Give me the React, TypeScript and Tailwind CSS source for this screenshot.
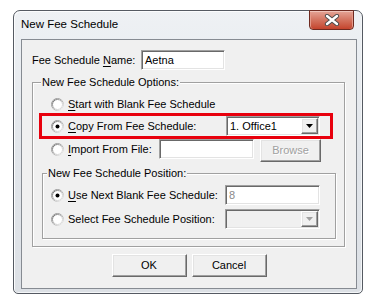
import type { ReactNode } from 'react';

function Radio({ checked = false }: { checked?: boolean }) {
    return (
        <svg width="13" height="13" viewBox="0 0 13 13" className="shrink-0">
            <defs>
                <linearGradient id="rOuter" x1="0" y1="0" x2="1" y2="1">
                    <stop offset="0" stopColor="#8a8a8a" />
                    <stop offset="0.55" stopColor="#b0b0b0" />
                    <stop offset="1" stopColor="#ffffff" />
                </linearGradient>
                <linearGradient id="rInner" x1="0" y1="0" x2="1" y2="1">
                    <stop offset="0" stopColor="#5a5a5a" />
                    <stop offset="0.55" stopColor="#c8c8c8" />
                    <stop offset="1" stopColor="#e3e3e3" />
                </linearGradient>
            </defs>
            <circle cx="6.5" cy="6.5" r="6" fill="#fff" stroke="url(#rOuter)" strokeWidth="1" />
            <circle cx="6.5" cy="6.5" r="5" fill="#fff" stroke="url(#rInner)" strokeWidth="1" />
            {checked && <circle cx="6.5" cy="6.5" r="2" fill="#000" />}
        </svg>
    );
}

// classic sunken 3d edge used by edits and combos
const sunken = 'border border-[#a0a0a0] border-r-white border-b-white shadow-[inset_1px_1px_0_#696969,inset_-1px_-1px_0_#e3e3e3]';
const raised = 'border border-white border-r-[#696969] border-b-[#696969] shadow-[inset_-1px_-1px_0_#a0a0a0,inset_1px_1px_0_#e3e3e3] bg-[#f0f0f0]';

function Combo({ value, disabled = false, w }: { value?: string; disabled?: boolean; w: string }) {
    return (
        <div className={`${sunken} ${w} h-[20px] flex items-stretch ${disabled ? 'bg-[#f0f0f0]' : 'bg-white'}`}>
            <div className="flex-1 flex items-center pl-[3px] pt-[1px]">{value}</div>
            <div className={`${raised} w-[17px] my-[1px] mr-[1px] flex items-center justify-center`}>
                <svg width="7" height="4" viewBox="0 0 7 4">
                    <path d="M0 0 H7 L3.5 4 Z" fill={disabled ? '#a0a0a0' : '#000'} />
                </svg>
            </div>
        </div>
    );
}

function Label({ children, w }: { children: ReactNode; w: string }) {
    return <span className={`${w} shrink-0 whitespace-nowrap`}>{children}</span>;
}

export default function App() {
    return (
        <div className="w-[380px] h-[304px] bg-white pt-[10px] pl-[13px] font-['Liberation_Sans',Arial,sans-serif] text-[11px] text-black">
            <div className="w-[350px] h-[284px] border border-[#555a62] rounded-t-[7px] rounded-b-[5px] bg-gradient-to-b from-[#eef1f4] via-[#e2e6eb] to-[#dce0e5] shadow-[inset_1px_1px_0_#fbfcfd,inset_-1px_-1px_0_#f4f6f8] flex flex-col">
                {/* title bar */}
                <div className="h-[28px] flex items-start justify-between shrink-0">
                    <div className="h-[28px] flex items-center pl-[7px] text-[11.5px] text-black">New Fee Schedule</div>
                    <div className="-mt-px mr-[8px] w-[45px] h-[20px] rounded-b-[4px] border border-[#6e2a20] bg-gradient-to-b from-[#e4a597] via-[#d3735f] to-[#c4432c] shadow-[inset_0_1px_0_#f0c4ba,inset_1px_0_0_#e59a8a,inset_-1px_0_0_#e59a8a] flex items-center justify-center">
                        <svg width="16" height="12" viewBox="0 0 16 12">
                            <path d="M3 2 L13 10 M13 2 L3 10" stroke="#4a4a4a" strokeWidth="4.2" strokeLinecap="round" />
                            <path d="M3 2 L13 10 M13 2 L3 10" stroke="#ffffff" strokeWidth="2.4" strokeLinecap="round" />
                        </svg>
                    </div>
                </div>

                {/* client area */}
                <div className="ml-[7px] w-[336px] h-[250px] border border-[#868b92] bg-[#f0f0f0] flex flex-col">
                    <div className="mt-[10px] ml-[10px] h-[20px] flex items-center">
                        <Label w="w-[109px]">Fee Schedule <u className="underline-offset-2">N</u>ame:</Label>
                        <div className={`${sunken} w-[84px] h-[20px] bg-white flex items-center pl-[3px] pt-[1px]`}>Aetna</div>
                    </div>

                    {/* options group */}
                    <div className="mt-[12px] ml-[10px] w-[313px] h-[165px] border border-[#a0a0a0] shadow-[1px_1px_0_#fff,inset_1px_1px_0_#fff] flex flex-col">
                        <div className="-mt-[8px] ml-[8px] w-fit h-[14px] leading-[14px] bg-[#f0f0f0] px-[1px]">New Fee Schedule Options:</div>

                        <div className="mt-[7px] h-[16px] pl-[18px] flex items-center gap-[4px]">
                            <Radio />
                            <span><u className="underline-offset-2">S</u>tart with Blank Fee Schedule</span>
                        </div>

                        <div className="mt-[1px] ml-[6px] w-[294px] h-[26px] border-[3px] border-[#e8000d] pl-[9px] flex items-center">
                            <Label w="w-[175px] flex items-center gap-[4px]">
                                <Radio checked />
                                <span><u className="underline-offset-2">C</u>opy From Fee Schedule:</span>
                            </Label>
                            <Combo value="1. Office1" w="w-[94px]" />
                        </div>

                        <div className="h-[23px] pl-[18px] flex items-start">
                            <Label w="w-[108px] h-[20px] flex items-center gap-[4px]">
                                <Radio />
                                <span><u className="underline-offset-2">I</u>mport From File:</span>
                            </Label>
                            <div className={`${sunken} w-[95px] h-[20px] bg-white`} />
                            <div className={`${raised} ml-[6px] w-[61px] h-[23px] flex items-center justify-center text-[#a0a0a0] [text-shadow:1px_1px_0_#fff]`}>Browse</div>
                        </div>

                        {/* position group */}
                        <div className="mt-[11px] ml-[9px] w-[294px] h-[66px] border border-[#a0a0a0] shadow-[1px_1px_0_#fff,inset_1px_1px_0_#fff] flex flex-col">
                            <div className="-mt-[8px] ml-[4px] w-fit h-[14px] leading-[14px] bg-[#f0f0f0] px-[1px]">New Fee Schedule Position:</div>

                            <div className="mt-[5px] h-[20px] pl-[8px] flex items-center">
                                <Label w="w-[174px] flex items-center gap-[4px]">
                                    <Radio checked />
                                    <span><u className="underline-offset-2">U</u>se Next Blank Fee Schedule:</span>
                                </Label>
                                <div className={`${sunken} w-[95px] h-[20px] bg-white flex items-center pl-[3px] pt-[1px] text-[#8a8a8a]`}>8</div>
                            </div>

                            <div className="mt-[4px] h-[20px] pl-[8px] flex items-center">
                                <Label w="w-[174px] flex items-center gap-[4px]">
                                    <Radio />
                                    <span>Select Fee Schedule Position:</span>
                                </Label>
                                <Combo disabled w="w-[95px]" />
                            </div>
                        </div>
                    </div>

                    <div className="mt-[7px] flex justify-center gap-[5px]">
                        <button className={`${raised} w-[75px] h-[23px] flex items-center justify-center`}>OK</button>
                        <button className={`${raised} w-[75px] h-[23px] flex items-center justify-center`}>Cancel</button>
                    </div>
                </div>
            </div>
        </div>
    );
}
